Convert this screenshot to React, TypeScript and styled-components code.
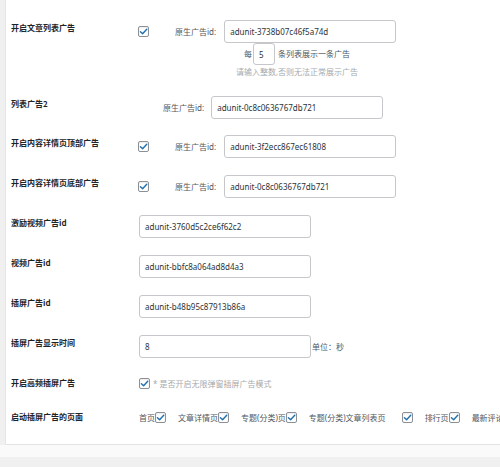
import React from "react";
import styled, { createGlobalStyle } from "styled-components";

const GlobalStyle = createGlobalStyle`
  html, body { margin: 0; padding: 0; background: #f0f0f1; }
  body {
    font-family: "Noto Sans", "Noto Sans CJK SC", sans-serif;
    font-size: 8px;
    color: #50575e;
  }
  * { box-sizing: border-box; }
`;

const Page = styled.div`
  width: 500px;
  height: 467px;
  overflow: hidden;
  background: #f0f0f1;
`;

const Panel = styled.div`
  height: 445px;
  margin-left: 5px;
  padding-top: 11px;
  background: #fff;
  border-left: 1px solid #e6e6e6;
  border-bottom: 1px solid #e3e3e3;
`;

const Strip = styled.div`
  height: 12px;
  background: #fafafa;
`;

const Row = styled.div<{ $pb?: number }>`
  display: flex;
  align-items: flex-start;
  padding: 9px 0 ${(p) => p.$pb ?? 8}px;
`;

const Label = styled.div`
  width: 133px;
  flex-shrink: 0;
  padding: 2px 0 0 5px;
  line-height: 12px;
  font-weight: 700;
  color: #1d2327;
  font-family: "Noto Sans CJK SC", "Noto Sans", sans-serif;
`;

const Field = styled.div`
  display: flex;
  flex-direction: column;
`;

const Line = styled.div<{ $h?: number }>`
  display: flex;
  align-items: center;
  height: ${(p) => p.$h ?? 23}px;
  white-space: nowrap;
`;

const Caption = styled.span<{ $ml?: number; $mr?: number }>`
  margin-left: ${(p) => p.$ml ?? 0}px;
  margin-right: ${(p) => p.$mr ?? 0}px;
  color: #50575e;
  line-height: 12px;
`;

const Note = styled.span`
  margin-left: 3px;
  color: #a7aaad;
`;

const TextInput = styled.input`
  width: 172px;
  height: 23px;
  padding: 0 5px;
  border: 1px solid #c5c7ca;
  border-radius: 3px;
  background: #fff;
  font: inherit;
  font-size: 8px;
  color: #2c3338;
  outline: none;
`;

const SmallInput = styled(TextInput)`
  width: 22px;
  height: 22px;
  margin: 0 3px 0 1px;
`;

const Sub = styled.div`
  width: 316px;
  display: flex;
  flex-direction: column;
  align-items: center;
`;

const Hint = styled.div`
  margin-top: 1px;
  line-height: 11px;
  color: #a7aaad;
`;

const Box = styled.span<{ $ml?: number }>`
  display: inline-flex;
  align-items: center;
  justify-content: center;
  width: 11px;
  height: 11px;
  margin-left: ${(p) => p.$ml ?? 0}px;
  flex-shrink: 0;
  border: 1px solid #8c8f94;
  border-radius: 2px;
  background: #fff;
  box-shadow: inset 0 1px 2px rgba(0, 0, 0, 0.08);
`;

const Check = ({ ml }: { ml?: number }) => (
  <Box $ml={ml}>
    <svg width="9" height="9" viewBox="0 0 10 10">
      <path d="M1.6 5.2 L4 7.4 L8.6 2.4" fill="none" stroke="#2271b1" strokeWidth="1.6" strokeLinecap="round" strokeLinejoin="round" />
    </svg>
  </Box>
);

const Pages = styled.div`
  display: flex;
  align-items: center;
  height: 17px;
  white-space: nowrap;
`;

const PageItem = styled.span`
  display: inline-flex;
  align-items: center;
  margin-right: 12px;
  color: #50575e;
`;

const NativeLine = ({ value, checkbox }: { value: string; checkbox?: boolean }) => (
  <Line>
    {checkbox && <Check ml={-1} />}
    <Caption $ml={checkbox ? 26 : 24}>原生广告id:</Caption>
    <TextInput defaultValue={value} style={{ marginLeft: checkbox ? 8 : 7 }} />
  </Line>
);

export default function App() {
  const plain: [string, string][] = [
    ["激励视频广告id", "adunit-3760d5c2ce6f62c2"],
    ["视频广告id", "adunit-bbfc8a064ad8d4a3"],
    ["插屏广告id", "adunit-b48b95c87913b86a"],
  ];
  const pages = ["首页", "文章详情页", "专题(分类)页"];

  return (
    <Page>
      <GlobalStyle />
      <Panel>
        <Row $pb={10}>
          <Label>开启文章列表广告</Label>
          <Field>
            <NativeLine value="adunit-3738b07c46f5a74d" checkbox />
            <Sub>
              <Line $h={22}>
                <Caption>每</Caption>
                <SmallInput defaultValue="5" />
                <Caption>条列表展示一条广告</Caption>
              </Line>
              <Hint>请输入整数,否则无法正常展示广告</Hint>
            </Sub>
          </Field>
        </Row>
        <Row $pb={7}>
          <Label>列表广告2</Label>
          <Field>
            <NativeLine value="adunit-0c8c0636767db721" />
          </Field>
        </Row>
        <Row>
          <Label>开启内容详情页顶部广告</Label>
          <Field>
            <NativeLine value="adunit-3f2ecc867ec61808" checkbox />
          </Field>
        </Row>
        <Row>
          <Label>开启内容详情页底部广告</Label>
          <Field>
            <NativeLine value="adunit-0c8c0636767db721" checkbox />
          </Field>
        </Row>
        {plain.map(([label, value]) => (
          <Row key={label}>
            <Label>{label}</Label>
            <Field>
              <Line>
                <TextInput defaultValue={value} />
              </Line>
            </Field>
          </Row>
        ))}
        <Row>
          <Label>插屏广告显示时间</Label>
          <Field>
            <Line>
              <TextInput defaultValue="8" />
              <Caption $ml={1}>单位：秒</Caption>
            </Line>
          </Field>
        </Row>
        <Row>
          <Label>开启高频插屏广告</Label>
          <Field>
            <Line $h={17}>
              <Check />
              <Note>* 是否开启无限弹窗插屏广告模式</Note>
            </Line>
          </Field>
        </Row>
        <Row>
          <Label>启动插屏广告的页面</Label>
          <Pages>
            {pages.map((p) => (
              <PageItem key={p}>
                {p}
                <Check />
              </PageItem>
            ))}
            <PageItem>
              专题(分类)文章列表页
              <Check ml={16} />
            </PageItem>
            <PageItem>
              排行页
              <Check />
            </PageItem>
            <PageItem>最新评论页</PageItem>
          </Pages>
        </Row>
      </Panel>
      <Strip />
    </Page>
  );
}
